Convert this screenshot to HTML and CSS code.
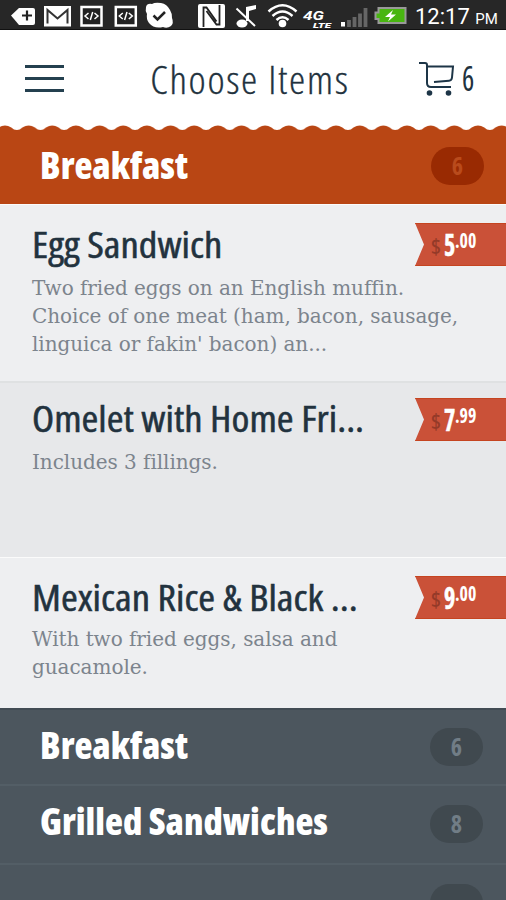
FILE: index.html
```html
<!DOCTYPE html>
<html lang="en">
<head>
  <meta charset="UTF-8">
  <meta name="viewport" content="width=device-width, initial-scale=1.0">
  <title>Choose Items</title>
  <link rel="stylesheet" href="styles.css">
</head>
<body>
  <!-- Status bar -->
  <div class="statusbar">
    <svg class="status-icons" width="410" height="30" viewBox="0 0 410 30">
      <!-- tag, mail, code, code, check -->
      <path d="M11 15.500L19 8h14q2 0 2 2v13q0 2-2 2H19z" fill="#fff"/>
      <path d="M27 10.500v10M22 15.500h10" stroke="#222" stroke-width="2.200"/>
      <rect x="44" y="6" width="27" height="20.500" fill="#fff"/>
      <path d="M47.500 23.500V10l10 8.500L67.500 10v13.500" fill="none" stroke="#333" stroke-width="2"/>
      <g id="code" fill="none" stroke="#fff">
        <rect x="81.500" y="7" width="20" height="18.500" fill="#222" stroke-width="2.500"/>
        <path d="M88.500 13l-3.500 3 3.500 3M94.500 13l3.500 3-3.500 3M92.700 12l-2.400 8" stroke-width="1.500"/>
      </g>
      <use href="#code" x="34.300"/>
      <path d="M146 7q1-4 6-3 3-2 9-1 6 1 9 7 2 3 2 8 2 5-1 8-4 3-8 1-9 2-14-4-3-4-2-9-2-3-1-7z" fill="#fff"/>
      <path d="M153.500 15.500l4 4 7.500-7.500" fill="none" stroke="#222" stroke-width="2.500"/>
      <!-- nfc, muted note, wifi -->
      <rect x="198" y="4" width="27" height="24" rx="2" fill="#fff"/>
      <path d="M203.500 27V7.500h3l10 14M219.500 5v19.500h-3l-10-13.500" fill="none" stroke="#222" stroke-width="1.800"/>
      <path d="M236.500 8.500L255 26" fill="none" stroke="#fff" stroke-width="2"/>
      <path d="M246 7l10-2v4l-7 2v10h-3z" fill="#fff"/>
      <ellipse cx="242" cy="23.500" rx="5.500" ry="4" fill="#fff"/>
      <g fill="none" stroke="#fff" stroke-width="2.500">
        <path d="M268.500 11.500q14-12.500 28 0"/>
        <path d="M272.500 16q10-9 20 0"/>
        <path d="M276.500 20q6-5.500 12 0"/>
      </g>
      <circle cx="282.500" cy="23.500" r="3.800" fill="#fff"/>
      <text class="net-type" x="303" y="20" textLength="21" lengthAdjust="spacingAndGlyphs">4G</text>
      <text class="net-sub" x="313" y="28" textLength="18" lengthAdjust="spacingAndGlyphs">LTE</text>
      <!-- signal, battery -->
      <rect x="341" y="22" width="4" height="4.500" fill="#fff"/>
      <path d="M349 27v-7M354.500 27v-10M360 27v-13.500M365.500 27V8" stroke="#666" stroke-width="3.800"/>
      <path d="M375.500 12.500h3V8h27v15h-27v-4h-3z" fill="#48b510" stroke="#999" stroke-width="2"/>
      <path d="M393 10l-8 7h5l-2 4.500 8-7h-5z" fill="#fff"/>
    </svg>
    <span class="clock">12:17 <small>PM</small></span>
  </div>

  <!-- Header -->
  <header class="header">
    <button class="menu-btn" aria-label="Menu"><i></i><i></i><i></i></button>
    <h1>Choose Items</h1>
    <div class="cart">
      <svg width="36" height="36" viewBox="0 0 36 36" fill="none" stroke="#1d3547" stroke-width="2">
        <path d="M0 2h6q2 0 2 2v18q0 4 4 4h20M8 5.500H34l-1 11q-.300 3-3 3.200L15 21"/>
        <circle cx="10.500" cy="32" r="2.800" fill="#1d3547" stroke="none"/>
        <circle cx="29.500" cy="32" r="2.800" fill="#1d3547" stroke="none"/>
      </svg>
      <span>6</span>
    </div>
  </header>

  <!-- Open category -->
  <section class="category active">
    <svg class="scallop" width="506" height="6">
      <defs>
        <pattern id="wave" x="-6.800" width="23.650" height="6" patternUnits="userSpaceOnUse">
          <path d="M0 6V5Q3 5 5.500 2.500Q11.800-1.500 18.100 2.500Q20.600 5 23.650 5V6z" fill="#b94614"/>
        </pattern>
      </defs>
      <rect width="506" height="6" fill="url(#wave)"/>
    </svg>
    <h2>Breakfast</h2>
    <span class="count">6</span>
  </section>

  <ul class="items">
    <li class="item">
      <div class="item-text">
        <h3>Egg Sandwich</h3>
        <p>Two fried eggs on an English muffin.<br>Choice of one meat (ham, bacon, sausage,<br>linguica or fakin' bacon) an...</p>
      </div>
      <div class="price"><i>$</i><b>5</b><sup>.00</sup></div>
    </li>
    <li class="item alt">
      <div class="item-text">
        <h3>Omelet with Home Fri...</h3>
        <p>Includes 3 fillings.</p>
      </div>
      <div class="price"><i>$</i><b>7</b><sup>.99</sup></div>
    </li>
    <li class="item last">
      <div class="item-text">
        <h3>Mexican Rice &amp; Black ...</h3>
        <p>With two fried eggs, salsa and<br>guacamole.</p>
      </div>
      <div class="price"><i>$</i><b>9</b><sup>.00</sup></div>
    </li>
  </ul>

  <!-- Other categories -->
  <section class="category first">
    <h2>Breakfast</h2>
    <span class="count">6</span>
  </section>
  <section class="category">
    <h2>Grilled Sandwiches</h2>
    <span class="count">8</span>
  </section>
  <section class="category">
    <h2></h2>
    <span class="count"></span>
  </section>
</body>
</html>
```

FILE: styles.css
```css
* {
  margin: 0;
  padding: 0;
  box-sizing: border-box;
}
body {
  width: 506px;
  height: 900px;
  overflow: hidden;
  background: #4c565e;
  font-family: 'Open Sans', sans-serif;
  font-stretch: 75%;
  color: #22323e;
}
/* Status bar */
.statusbar {
  display: flex;
  align-items: center;
  height: 30px;
  background: #272727;
  border-bottom: 1px solid #111;
  color: #fff;
}
.status-icons {
  flex: none;
}
.net-type {
  font: italic bold 13px 'Roboto', sans-serif;
  fill: #fff;
}
.net-sub {
  font: italic 900 7px 'Roboto', sans-serif;
  fill: #fff;
}
.clock {
  margin-left: 5px;
  padding-top: 4px;
  font: 22px 'Roboto', sans-serif;
  white-space: nowrap;
}
.clock small {
  font-size: 15px;
}
/* Header */
.header {
  display: flex;
  align-items: center;
  justify-content: space-between;
  height: 95px;
  padding: 2px 31px 0 25px;
  background: #fff;
}
.menu-btn {
  display: flex;
  flex-direction: column;
  gap: 9px;
  width: 39px;
  border: 0;
  background: none;
}
.menu-btn i {
  height: 3px;
  background: #24404f;
}
.header h1 {
  margin-left: 18px;
  font-size: 39px;
  font-weight: 300;
  letter-spacing: 1.6px;
  transform: scaleX(1.05);
  -webkit-text-stroke: 0.3px;
}
.cart {
  display: flex;
  align-items: center;
  gap: 6px;
  font-size: 34px;
}
.cart span {
  margin-top: -2px;
  transform: scaleX(0.85);
}
/* Category bars */
.category {
  position: relative;
  display: flex;
  align-items: center;
  justify-content: space-between;
  height: 79px;
  padding: 0 23px 2px 40px;
  background: #4c565e;
  border-top: 2px solid #535e66;
  color: #fff;
}
.category.first {
  height: 76px;
  padding-bottom: 0;
  border-color: #424c54;
}
.category h2 {
  margin-top: -6px;
  font-size: 37px;
  font-weight: 800;
}
.count {
  width: 53px;
  height: 38px;
  border-radius: 19px;
  background: #40494f;
  color: #717d86;
  font-size: 24px;
  font-weight: 700;
  line-height: 38px;
  text-align: center;
}
.category.active {
  height: 79px;
  padding: 2px 22px 0 40px;
  border: 0;
  background: linear-gradient(#fff 5px, #b94614 5px);
}
.category.active h2 {
  margin-top: -3px;
}
.category.active .count {
  background: #992a02;
  color: #b94b1c;
}
.scallop {
  position: absolute;
  top: 0;
  left: 0;
}
/* Menu items */
.items {
  list-style: none;
}
.item {
  display: flex;
  justify-content: space-between;
  height: 177px;
  padding: 18px 0 0 32px;
  background: #eeeff1;
  border-top: 1px solid #fbfbfb;
}
.item.alt {
  height: 176px;
  padding-top: 15px;
  background: #e7e8ea;
  border-top: 2px solid #dfe1e2;
}
.item.last {
  height: 151px;
}
.item-text {
  width: 383px;
  white-space: nowrap;
}
.item h3 {
  font-size: 35.5px;
  font-weight: 500;
  line-height: 42px;
  transform: scaleX(1.145);
  transform-origin: left;
  -webkit-text-stroke: 0.5px;
}
.item.alt h3 {
  line-height: 40px;
}
.item.last h3 {
  line-height: 43px;
}
.item p {
  margin-top: 9px;
  font-family: 'DejaVu Serif', serif;
  font-stretch: normal;
  font-size: 20px;
  letter-spacing: -0.05px;
  line-height: 28px;
  color: #7c848d;
}
.item.alt p {
  margin-top: 10px;
}
.item.last p {
  margin-top: 6px;
}
/* Price ribbon */
.price {
  display: flex;
  width: 91px;
  height: 43px;
  padding-left: 16px;
  background: #ca5138;
  border: solid #c54420;
  border-width: 1px 0;
  clip-path: polygon(0 0, 100% 0, 100% 100%, 0 100%, 9px 50%);
  color: #fff;
}
.price i {
  width: 13px;
  font-style: normal;
  font-size: 22px;
  font-weight: 600;
  line-height: 43px;
  color: #943a28;
}
.price b {
  width: 11px;
  font-size: 30px;
  line-height: 41px;
  transform: scaleX(0.8);
  transform-origin: left;
  -webkit-text-stroke: 0.5px;
}
.price sup {
  font-size: 21px;
  font-weight: 700;
  line-height: 32px;
  transform: scaleX(0.85);
  transform-origin: left;
}
```
